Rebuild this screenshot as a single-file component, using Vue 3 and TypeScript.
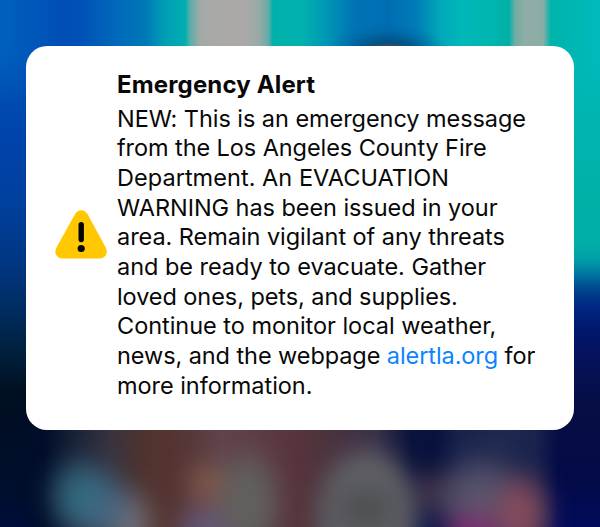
<script setup lang="ts">
interface Line {
  text: string
  link?: string
  after?: string
  tracking: number
}

const title = 'Emergency Alert'
const lines: Line[] = [
  { text: 'NEW: This is an emergency message', tracking: -0.06 },
  { text: 'from the Los Angeles County Fire', tracking: -0.08 },
  { text: 'Department. An EVACUATION', tracking: 0.04 },
  { text: 'WARNING has been issued in your', tracking: -0.06 },
  { text: 'area. Remain vigilant of any threats', tracking: -0.05 },
  { text: 'and be ready to evacuate. Gather', tracking: -0.04 },
  { text: 'loved ones, pets, and supplies.', tracking: -0.07 },
  { text: 'Continue to monitor local weather,', tracking: -0.03 },
  { text: 'news, and the webpage ', link: 'alertla.org', after: ' for', tracking: -0.08 },
  { text: 'more information.', tracking: -0.05 },
]
</script>

<template>
  <main class="screen">
    <div class="backdrop top"></div>
    <div class="backdrop bottom"></div>
    <div class="backdrop glow"></div>
    <section class="alert" role="alert">
      <svg class="icon" viewBox="0 0 52 50" aria-hidden="true">
        <path
          d="M19.800 4.600C22.600-1.200 29.800-1.200 32.800 4.600L50.600 37.200C53.600 43.200 50.500 48.500 44 48.500H8.200C1.600 48.500-1.500 43.200 1.600 37.200Z"
          fill="#ffc800"
        />
        <path d="M26.200 14.800V29.600" stroke="#050505" stroke-width="5.400" stroke-linecap="round" />
        <circle cx="26.200" cy="38.500" r="3.600" fill="#050505" />
      </svg>
      <div class="content">
        <h1 class="title">{{ title }}</h1>
        <p class="message">
          <span
            v-for="line in lines"
            :key="line.text"
            class="line"
            :style="{ letterSpacing: line.tracking + 'px' }"
          ><span>{{ line.text }}</span><a v-if="line.link" class="link">{{ line.link }}</a><span v-if="line.after">{{ line.after }}</span></span>
        </p>
      </div>
    </section>
  </main>
</template>

<style>
body {
  margin: 0;
}
</style>

<style scoped>
.screen {
  display: grid;
  grid-template: 527px / 600px;
  width: 600px;
  height: 527px;
  overflow: hidden;
  font-family: Inter, 'Liberation Sans', sans-serif;
  background:
    linear-gradient(180deg, #0060bd 0, #0052b5 60px, #0043aa 140px, #00409d 200px, #003785 260px, #002c60 310px, #001f3b 355px, #001021 390px, #000d26 430px, #000f2c 490px, #000c3a 527px) 0 0 / 300px 527px no-repeat,
    linear-gradient(180deg, #00babc 0, #00b7b4 80px, #00b1a8 190px, #00aea7 245px, #009ea8 260px, #007ba3 272px, #005594 284px, #00398a 295px, #002580 310px, #00176b 330px, #05135e 355px, #060e45 400px, #060d45 430px, #030b48 480px, #020b5a 527px) 300px 0 / 300px 527px no-repeat;
}

.backdrop,
.alert {
  grid-area: 1 / 1;
}

.top {
  height: 110px;
  background:
    radial-gradient(ellipse 24px 6px at 388px 48px, #45506d, transparent),
    radial-gradient(ellipse 62px 30px at 388px 53px, #004468 0%, #004c78dd 35%, #005c9555 72%, transparent),
    linear-gradient(90deg, #0060bd 0, #005abb 25px, #004eb5 60px, #0051b7 80px, #0068ba 115px, #0078b8 145px, #009fb4 165px, #00aeb0 185px, #58aeab 190px, #a0aaa6 200px, #aaa9a6 212px, #aba9a7 245px, #98aaa6 259px, #67aca8 268px, #00b0ab 273px, #00b2ae 300px, #009fb4 320px, #0074b5 353px, #006db3 388px, #007bb8 415px, #00a8b8 440px, #00b8ba 462px, #00b5ae 495px, #00b0a6 509px, #70ada5 515px, #8fada6 525px, #8bada6 543px, #00b3ab 551px, #00b8b8 585px, #00babc 600px);
  mask-image: linear-gradient(180deg, #000 47px, transparent 108px);
}

.bottom {
  align-self: end;
  height: 107px;
  background: linear-gradient(90deg, transparent 20px, #020e29 45px, #1a2238 75px, #38333f 110px, #50332f 145px, #543431 170px, #573839 190px, #60444b 220px, #5d3c43 260px, #56343b 300px, #49323f 335px, #393148 375px, #0a133c 412px, #08123d 435px, #1a244b 462px, #20294f 500px, #1a234d 535px, #060d4500 558px);
}

.glow {
  margin-bottom: -30px;
  filter: blur(11px);
  background:
    radial-gradient(ellipse 38px 45px at 80px 496px, #317287, #3b718799 60%, transparent),
    radial-gradient(ellipse 36px 45px at 101px 508px, #496686, #45658288 60%, transparent),
    radial-gradient(ellipse 30px 43px at 129px 523px, #828087, #70707b99 60%, transparent),
    radial-gradient(ellipse 25px 30px at 206px 484px, #90604e, #83594b88 55%, transparent),
    radial-gradient(ellipse 36px 34px at 203px 530px, #66608c, transparent),
    radial-gradient(ellipse 38px 60px at 247px 502px, #61645f, #616461cc 60%, transparent),
    radial-gradient(ellipse 46px 35px at 366px 509px, #484a4c, #505256cc 45%, transparent),
    radial-gradient(ellipse 57px 75px at 367px 517px, #5b5d62, #626267 75%, #5b5d6200),
    radial-gradient(ellipse 36px 30px at 472px 535px, #9a2075, transparent),
    radial-gradient(ellipse 34px 50px at 521px 515px, #945060, #80495bcc 60%, transparent),
    radial-gradient(ellipse 48px 52px at 480px 501px, #625b72, #56526bcc 60%, transparent),
    radial-gradient(ellipse 30px 30px at 435px 492px, #563b4b, transparent),
    radial-gradient(ellipse 48px 26px at 430px 530px, #0d164f, transparent);
}

.alert {
  position: relative;
  box-sizing: border-box;
  display: flex;
  align-items: flex-start;
  width: 548px;
  height: 383.500px;
  margin: 46px 0 0 26px;
  padding: 24px 20px 0 29px;
  border-radius: 21px;
  background: #fff;
  color: #080808;
}

.icon {
  flex: none;
  width: 52px;
  height: 50px;
  margin-top: 140px;
}

.content {
  margin-left: 10px;
}

.title {
  margin: 0;
  font-size: 24px;
  font-weight: 700;
  line-height: 30px;
  letter-spacing: 0.150px;
  white-space: pre;
}

.message {
  margin: 3.500px 0 0;
  font-size: 23.500px;
  line-height: 29.700px;
}

.line {
  display: block;
  width: max-content;
  white-space: pre;
}

.link {
  color: #0a84ff;
}
</style>
